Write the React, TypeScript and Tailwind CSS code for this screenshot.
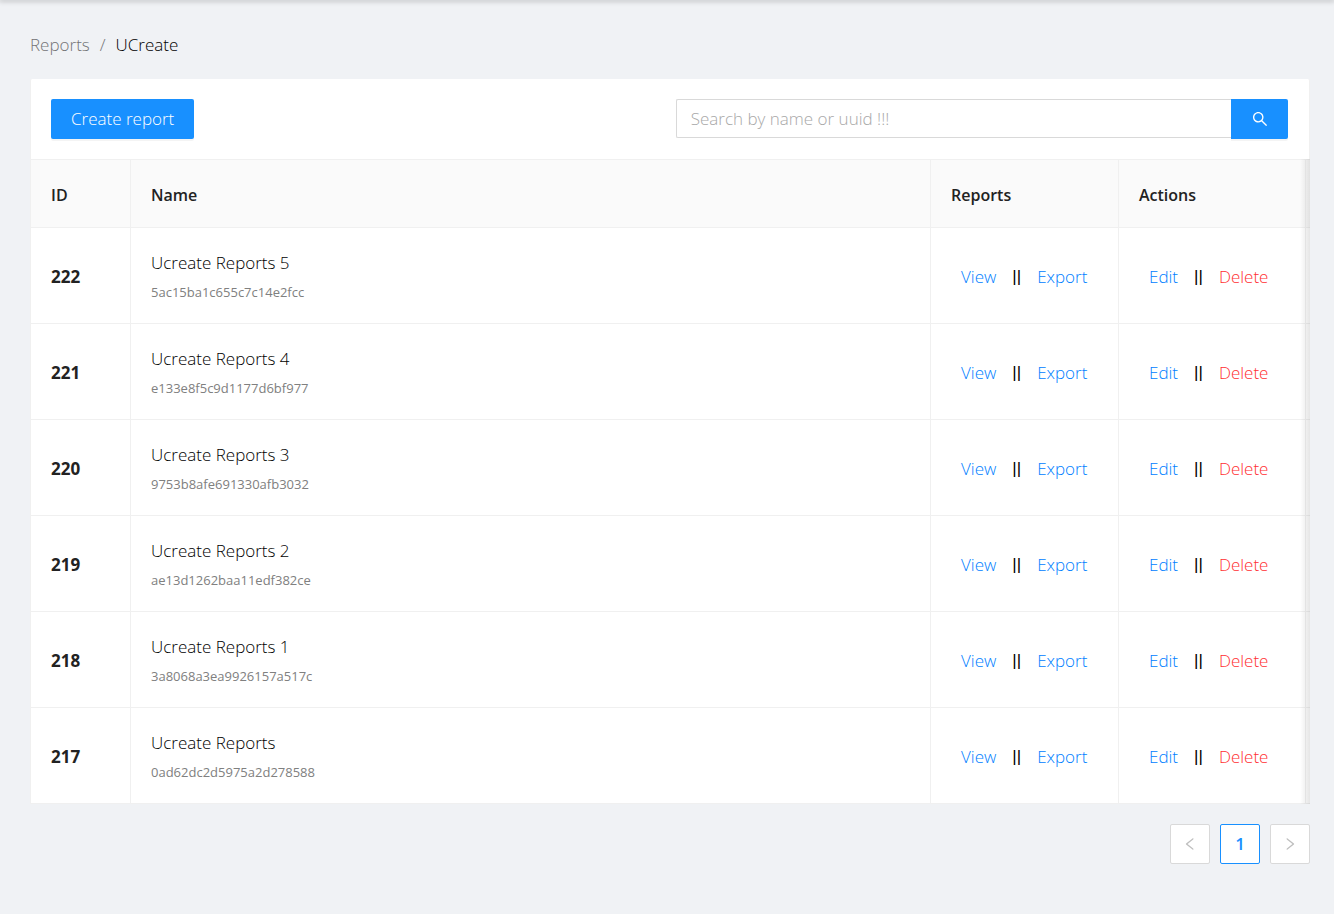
import { AiOutlineLeft, AiOutlineRight, AiOutlineSearch } from "react-icons/ai";

const reports = [
  { id: 222, name: "Ucreate Reports 5", uuid: "5ac15ba1c655c7c14e2fcc" },
  { id: 221, name: "Ucreate Reports 4", uuid: "e133e8f5c9d1177d6bf977" },
  { id: 220, name: "Ucreate Reports 3", uuid: "9753b8afe691330afb3032" },
  { id: 219, name: "Ucreate Reports 2", uuid: "ae13d1262baa11edf382ce" },
  { id: 218, name: "Ucreate Reports 1", uuid: "3a8068a3ea9926157a517c" },
  { id: 217, name: "Ucreate Reports", uuid: "0ad62dc2d5975a2d278588" },
];

const Separator = () => <span className="font-['Liberation_Sans',sans-serif]">||</span>;

const Breadcrumb = () => (
  <nav aria-label="Breadcrumb" className="flex items-center gap-[10px] leading-7">
    <a href="#reports" className="text-[#737476]">
      Reports
    </a>
    <span className="text-[#737476]">/</span>
    <span>UCreate</span>
  </nav>
);

const Toolbar = () => (
  <div className="flex items-start justify-between rounded-t-[2px] border-x border-[#f0f0f0] bg-white py-5 pr-[21px] pl-5">
    <button type="button" className="h-10 rounded-[2px] bg-[#1890ff] px-5 text-white shadow-[0_2px_0_rgba(0,0,0,0.045)]">
      Create report
    </button>
    <form className="flex w-[49.5%] items-start" role="search" onSubmit={(e) => e.preventDefault()}>
      <input
        type="text"
        aria-label="Search by name or uuid"
        placeholder="Search by name or uuid !!!"
        className="h-[39px] min-w-0 flex-1 rounded-l-[2px] border border-r-0 border-[#d9d9d9] bg-white px-[14px] outline-none placeholder:text-[#a8a8a8]"
      />
      <button
        type="submit"
        aria-label="Search"
        className="flex h-10 w-[57px] items-center justify-center rounded-r-[2px] bg-[#1890ff] text-white shadow-[0_2px_0_rgba(0,0,0,0.045)]"
      >
        <AiOutlineSearch size={18} />
      </button>
    </form>
  </div>
);

const ReportsTable = () => (
  <div className="relative overflow-hidden">
    <table className="w-full table-fixed border-separate border-spacing-0 border-l border-t border-[#f0f0f0] bg-white text-left">
      <colgroup>
        <col className="w-[100px]" />
        <col />
        <col className="w-[188px]" />
        <col className="w-[187px]" />
        <col className="w-[4px]" />
      </colgroup>
      <thead>
        <tr className="h-[68px] bg-[#fafafa] text-base text-[#222222]">
          {["ID", "Name", "Reports", "Actions"].map((title) => (
            <th key={title} scope="col" className="border-b border-r border-[#f0f0f0] px-5 pt-0.5 font-semibold">
              {title}
            </th>
          ))}
          <td className="border-b border-[#f0f0f0]" />
        </tr>
      </thead>
      <tbody>
        {reports.map(({ id, name, uuid }) => (
          <tr key={id} className="h-24">
            <th scope="row" className="border-b border-r border-[#f0f0f0] px-5 pt-0.5 font-bold text-[#222222]">
              {id}
            </th>
            <td className="border-b border-r border-[#f0f0f0] px-5">
              <p className="leading-8">{name}</p>
              <p className="text-[13px] leading-[26px] font-normal text-[#808080]">{uuid}</p>
            </td>
            <td className="border-b border-r border-[#f0f0f0] pt-0.5 pl-[30px]">
              <div className="flex items-center gap-4">
                <a href={`#view-${id}`} className="text-[#0080ff]">
                  View
                </a>
                <Separator />
                <a href={`#export-${id}`} className="text-[#0080ff]">
                  Export
                </a>
              </div>
            </td>
            <td className="border-b border-r border-[#f0f0f0] pt-0.5 pl-[30px]">
              <div className="flex items-center gap-4">
                <a href={`#edit-${id}`} className="text-[#0080ff]">
                  Edit
                </a>
                <Separator />
                <a href={`#delete-${id}`} className="text-[#ff2e31]">
                  Delete
                </a>
              </div>
            </td>
            <td className="border-b border-[#f0f0f0]" />
          </tr>
        ))}
      </tbody>
    </table>
    {/* scroll shadow on the right edge */}
    <div className="pointer-events-none absolute inset-y-0 right-0 w-[10px] bg-linear-to-r from-transparent to-black/10" />
  </div>
);

const Pagination = () => (
  <nav aria-label="Pagination" className="mt-5 flex justify-end gap-[10px]">
    <button
      type="button"
      disabled
      aria-label="Previous page"
      className="flex size-10 items-center justify-center rounded-[2px] border border-[#d9d9d9] bg-white text-[#bfbfbf]"
    >
      <AiOutlineLeft size={16} />
    </button>
    <button
      type="button"
      aria-current="page"
      className="size-10 rounded-[2px] border border-[#1890ff] bg-white font-semibold text-[#1890ff]"
    >
      1
    </button>
    <button
      type="button"
      disabled
      aria-label="Next page"
      className="flex size-10 items-center justify-center rounded-[2px] border border-[#d9d9d9] bg-white text-[#bfbfbf]"
    >
      <AiOutlineRight size={16} />
    </button>
  </nav>
);

const App = () => {
  return (
    <div className="bg-[#f0f2f5] font-['Open_Sans',sans-serif] text-[17px] font-light text-black">
      {/* bottom edge of the app header */}
      <div className="h-0 shadow-[0_0_5px_1px_rgba(0,0,0,0.35)]" />
      <main className="pt-[31px] pr-6 pb-[50px] pl-[30px]">
        <Breadcrumb />
        <section className="mt-5">
          <Toolbar />
          <ReportsTable />
          <Pagination />
        </section>
      </main>
    </div>
  );
};

export default App;
